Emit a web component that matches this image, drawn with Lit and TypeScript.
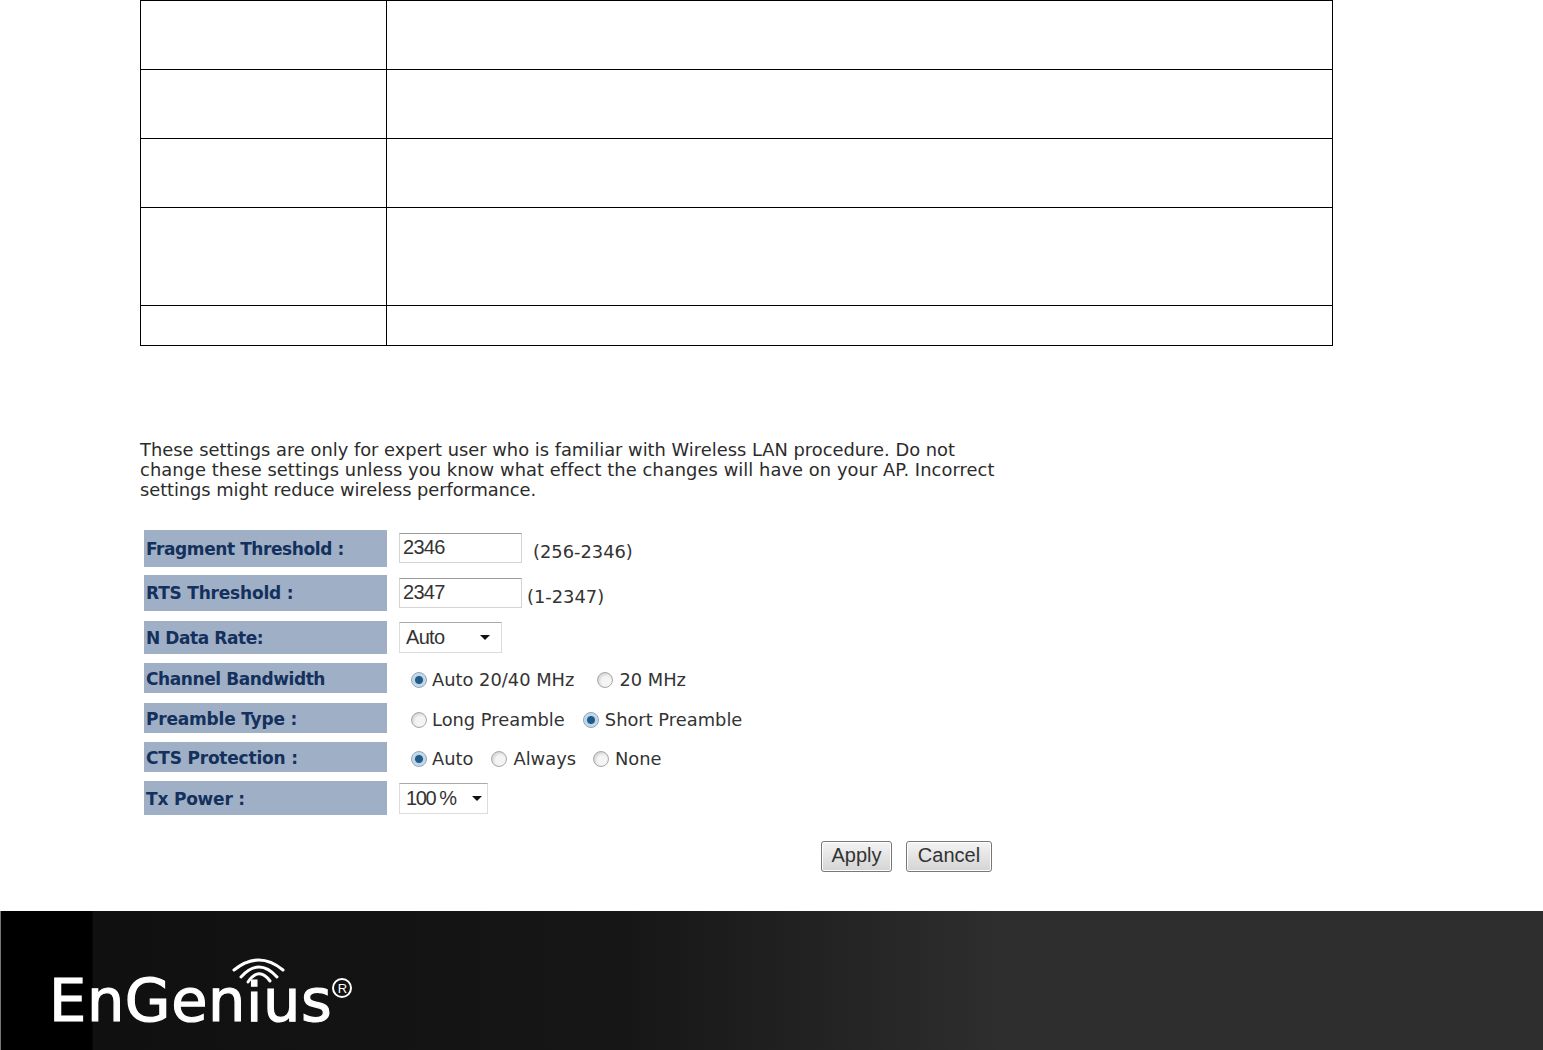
import { LitElement, html, css, svg } from "lit";
import { customElement } from "lit/decorators.js";

const radio = (on: boolean) => html`<span class="radio ${on ? "on" : ""}"></span>`;
const opt = (label: string, on: boolean, gap: string) =>
  html`<span class="opt ${gap}">${radio(on)}<span>${label}</span></span>`;

@customElement("app-root")
export class AppRoot extends LitElement {
  static styles = css`
    :host { display: block; width: 1543px; height: 1050px; background: #fff; overflow: hidden; font-family: "DejaVu Sans", Verdana, sans-serif; color: #222; }
    .page { display: flex; flex-direction: column; height: 1050px; }
    .table { margin-left: 140px; width: 1193px; border: 1px solid #000; border-bottom: 0; box-sizing: border-box; display: grid; grid-template-columns: 246px 1fr; flex: none; }
    .table > div { border-bottom: 1px solid #000; box-sizing: border-box; }
    .table > div:nth-child(odd) { border-right: 1px solid #000; }
    .h69 { height: 69px; }
    .h98 { height: 98px; }
    .h40 { height: 40px; }
    .first { height: 69px; }
    .main { flex: 1; display: flex; flex-direction: column; padding: 94px 0 0 140px; box-sizing: border-box; min-height: 0; }
    .intro { margin: 0; width: 860px; font-size: 17.85px; line-height: 20px; color: #2b2b2b; white-space: nowrap; }
    .l2 { letter-spacing: 0.065px; }
    .l3 { letter-spacing: -0.07px; }
    .form { display: flex; flex-direction: column; margin: 30px 0 0 4px; }
    .row { display: flex; align-items: stretch; }
    .label { width: 243px; flex: none; background: #9fafc6; color: #14305c; font-weight: 700; font-size: 17px; letter-spacing: -0.42px; display: flex; align-items: center; padding-left: 2px; box-sizing: border-box; white-space: nowrap; }
    .r1 { height: 37px; margin-bottom: 8px; }
    .r2 { height: 36px; margin-bottom: 10px; }
    .r3 { height: 33px; margin-bottom: 9px; }
    .r4 { height: 30px; margin-bottom: 10px; }
    .r5 { height: 30px; margin-bottom: 9px; }
    .r6 { height: 30px; margin-bottom: 9px; }
    .r7 { height: 34px; }
    .r4 .label, .r5 .label, .r6 .label, .r7 .label { padding-top: 1px; }
    .r2 .label, .r5 .label, .r6 .label, .r7 .label { letter-spacing: -0.2px; }
    .val { display: flex; align-items: center; padding-left: 12px; font-size: 17.85px; color: #333; white-space: nowrap; }
    .input { width: 123px; height: 30px; box-sizing: border-box; border: 1px solid #d4d4d4; border-top-color: #9a9a9a; font-family: "Liberation Sans", Arial, sans-serif; font-size: 20px; letter-spacing: -0.7px; color: #333; display: flex; align-items: center; padding: 0 0 1px 3px; margin-top: -2px; }
    .r2 .input { margin-top: 0; }
    .hint { margin: 6px 0 0 11px; }
    .hint2 { margin: 6px 0 0 5px; }
    .select { height: 31px; box-sizing: border-box; border: 1px solid #dcdcdc; border-top-color: #aaa; font-family: "Liberation Sans", Arial, sans-serif; font-size: 20px; letter-spacing: -0.7px; color: #333; display: flex; align-items: center; justify-content: space-between; padding: 0 11px 0 6px; }
    .s1 { width: 103px; }
    .s2 { width: 89px; padding-right: 5px; padding-left: 6px; letter-spacing: -1.4px; }
    .caret { width: 0; height: 0; border: 5px solid transparent; border-top: 5px solid #111; border-bottom: 0; }
    .opts { padding-left: 24px; padding-top: 3px; gap: 0; }
    .opt { display: inline-flex; align-items: center; gap: 5px; }
    .opt + .opt { gap: 6px; }
    .g1 { margin-right: 23px; }
    .g2 { margin-right: 18px; }
    .g3 { margin-right: 18px; }
    .g4 { margin-right: 17px; }
    .radio { width: 16px; height: 16px; border-radius: 50%; box-sizing: border-box; border: 1px solid #a9a9a9; background: radial-gradient(circle at 60% 60%, #f4f4f4 0 40%, #d6d6d6 70%, #bdbdbd 100%); flex: none; }
    .radio.on { border-color: #8fa3b8; background: radial-gradient(circle, #1f5c8c 0 3.5px, #bcd3e4 4.5px, #dfe8f0 100%); }
    .buttons { display: flex; gap: 14px; margin: 26px 0 0 681px; }
    .btn { height: 31px; box-sizing: border-box; border: 1px solid #777; border-radius: 3px; background: linear-gradient(#f4f4f4, #e2e2e2 55%, #d4d4d4); box-shadow: inset 0 0 0 1px #fff; font-family: "Liberation Sans", Arial, sans-serif; font-size: 20px; color: #333; display: flex; align-items: center; justify-content: center; padding-bottom: 2px; }
    .apply { width: 71px; }
    .cancel { width: 86px; }
    .footer { height: 139px; flex: none; border-left: 1px solid #777; background: linear-gradient(90deg, #000 0 91px, #101010 92px, #161616 40%, #2e2e2e 65%, #2e2e2e 100%); display: flex; align-items: flex-start; padding: 46px 0 0 48px; box-sizing: border-box; }
    .logo { display: flex; flex-direction: column; }
    .wifi { display: block; margin-left: 181px; width: 60px; height: 34px; }
    .brand { display: flex; align-items: flex-start; margin-top: -25px; color: #fff; }
    .name { font-family: "DejaVu Sans", Verdana, sans-serif; font-weight: 400; font-size: 59px; line-height: 70px; letter-spacing: 0.6px; -webkit-text-stroke: 1.2px #fff; }
    .dotted { display: inline-block; transform: scaleY(0.9); transform-origin: 50% 55px; }
    .reg { width: 20px; height: 20px; margin: 12px 0 0 0; border: 2px solid #fff; border-radius: 50%; box-sizing: border-box; display: flex; align-items: center; justify-content: center; font-family: "Liberation Sans", Arial, sans-serif; font-size: 13px; line-height: 1; }
  `;

  render() {
    const wifi = svg`<g fill="none" stroke="#fff" stroke-linecap="round" stroke-width="3">
      <path d="M4 13 Q29 -7 53 13"/>
      <path d="M11 20 Q29 0 47 20"/>
      <path d="M18 25 Q29 9 40 24"/>
    </g>`;
    return html`<div class="page">
      <div class="table">
        <div class="first"></div><div></div>
        <div class="h69"></div><div></div>
        <div class="h69"></div><div></div>
        <div class="h98"></div><div></div>
        <div class="h40"></div><div></div>
      </div>
      <div class="main">
        <p class="intro">These settings are only for expert user who is familiar with Wireless LAN procedure. Do not<br><span class="l2">change these settings unless you know what effect the changes will have on your AP. Incorrect</span><br><span class="l3">settings might reduce wireless performance.</span></p>
        <div class="form">
          <div class="row r1"><div class="label">Fragment Threshold :</div><div class="val"><div class="input">2346</div><span class="hint">(256-2346)</span></div></div>
          <div class="row r2"><div class="label">RTS Threshold :</div><div class="val"><div class="input">2347</div><span class="hint2">(1-2347)</span></div></div>
          <div class="row r3"><div class="label">N Data Rate:</div><div class="val"><div class="select s1"><span>Auto</span><span class="caret"></span></div></div></div>
          <div class="row r4"><div class="label">Channel Bandwidth</div><div class="val opts">${opt("Auto 20/40 MHz", true, "g1")}${opt("20 MHz", false, "")}</div></div>
          <div class="row r5"><div class="label">Preamble Type :</div><div class="val opts">${opt("Long Preamble", false, "g2")}${opt("Short Preamble", true, "")}</div></div>
          <div class="row r6"><div class="label">CTS Protection :</div><div class="val opts">${opt("Auto", true, "g3")}${opt("Always", false, "g4")}${opt("None", false, "")}</div></div>
          <div class="row r7"><div class="label">Tx Power :</div><div class="val"><div class="select s2"><span>100 %</span><span class="caret"></span></div></div></div>
        </div>
        <div class="buttons"><div class="btn apply">Apply</div><div class="btn cancel">Cancel</div></div>
      </div>
      <div class="footer">
        <div class="logo">
          <svg class="wifi" viewBox="0 0 60 34">${wifi}</svg>
          <div class="brand"><span class="name">EnGen<span class="dotted">i</span>us</span><span class="reg">R</span></div>
        </div>
      </div>
    </div>`;
  }
}
